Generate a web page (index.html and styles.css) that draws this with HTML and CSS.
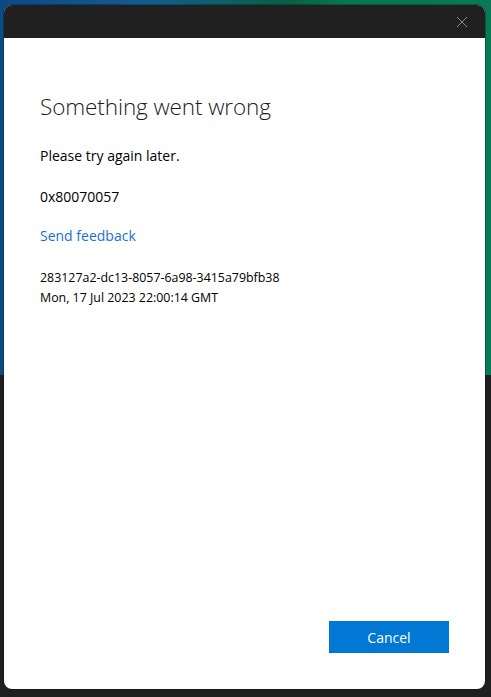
FILE: index.html
```html
<!DOCTYPE html>
<html lang="en">
<head>
<meta charset="utf-8">
<title>Something went wrong</title>
<link rel="stylesheet" href="styles.css">
</head>
<body>
<div class="dialog">
  <div class="titlebar">
    <button class="close" aria-label="Close">
      <svg width="12" height="12" viewBox="0 0 12 12"><path d="M1 1L11 11M11 1L1 11" stroke="#8a8a8a" stroke-width="1" fill="none"/></svg>
    </button>
  </div>
  <div class="content">
    <h1 class="title">Something went wrong</h1>
    <p class="msg msg-first">Please try again later.</p>
    <p class="msg">0x80070057</p>
    <a class="link" href="#">Send feedback</a>
    <div class="meta">
      <div>283127a2-dc13-8057-6a98-3415a79bfb38</div>
      <div>Mon, 17 Jul 2023 22:00:14 GMT</div>
    </div>
    <div class="actions">
      <button class="btn">Cancel</button>
    </div>
  </div>
</div>
</body>
</html>
```
FILE: styles.css
```css
html, body {
  margin: 0;
  padding: 0;
  height: 697px;
  overflow: hidden;
}
body {
  background:
    linear-gradient(to bottom, transparent 375px, #1f1f1f 375px),
    linear-gradient(to right, #0c4a86 0%, #135b8e 30%, #0e5f6a 45%, #075f45 58%, #077552 70%, #087a55 100%);
  font-family: "Segoe UI", "Open Sans", "Noto Sans", sans-serif;
  padding: 5px 6px 8px 4px;
  box-sizing: border-box;
}
.dialog {
  height: 684px;
  border-radius: 8px;
  overflow: hidden;
  background: #ffffff;
  display: flex;
  flex-direction: column;
  box-shadow: 0 0 0 1px rgba(0,0,0,0.25);
}
.titlebar {
  height: 33px;
  background: #202020;
  display: flex;
  justify-content: flex-end;
  align-items: center;
  flex: none;
}
.close {
  width: 46px;
  height: 33px;
  border: 0;
  background: transparent;
  padding: 0;
  display: flex;
  align-items: center;
  justify-content: center;
}
.content {
  flex: 1;
  display: flex;
  flex-direction: column;
  padding: 53px 36px 36px 36px;
}
.title {
  margin: 0;
  font-size: 22.5px;
  font-weight: 300;
  line-height: 32px;
  color: #1b1b1b;
  letter-spacing: -0.1px;
}
.msg {
  margin: 21px 0 0;
  font-size: 14px;
  line-height: 20px;
  color: #000;
}
.msg-first {
  margin-top: 23px;
}
.link {
  margin-top: 19px;
  font-size: 14px;
  line-height: 20px;
  color: #1a6fd0;
  text-decoration: none;
  align-self: flex-start;
}
.meta {
  margin-top: 22px;
  font-size: 12.4px;
  line-height: 20px;
  color: #000;
}
.actions {
  margin-top: auto;
  display: flex;
  justify-content: flex-end;
}
.btn {
  width: 120px;
  height: 32px;
  border: 0;
  background: #0078d4;
  color: #ffffff;
  font-family: inherit;
  font-size: 14px;
}
```
